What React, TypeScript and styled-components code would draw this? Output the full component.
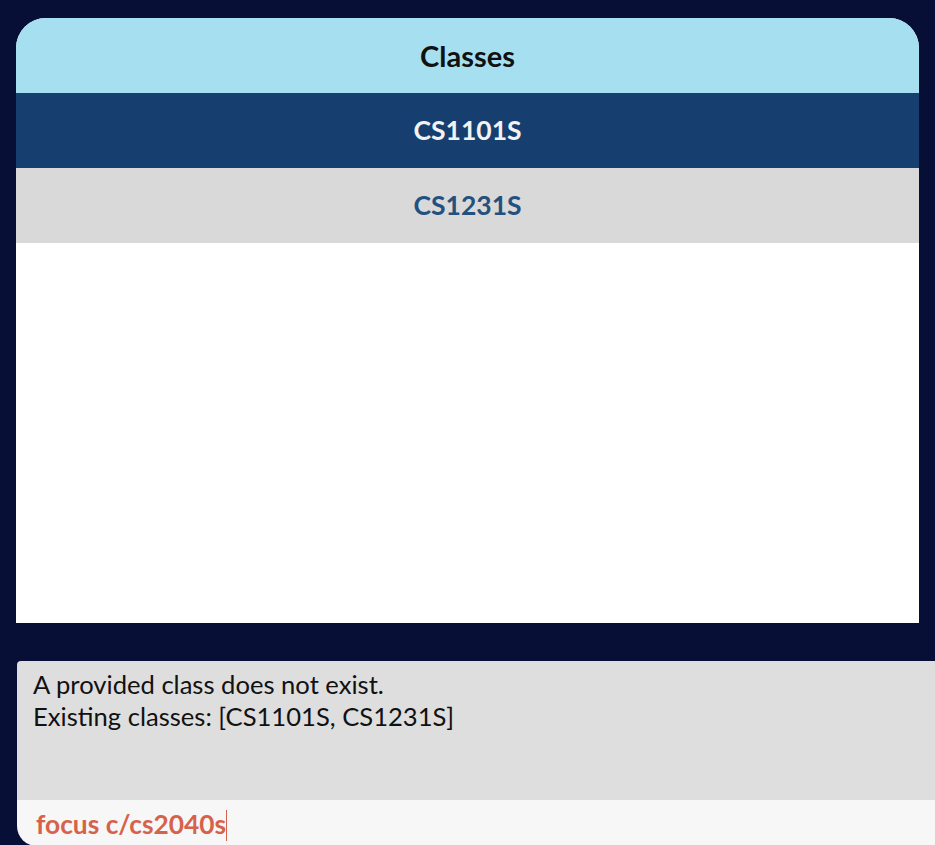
import styled, { createGlobalStyle } from 'styled-components';

const GlobalStyle = createGlobalStyle`
  html, body {
    margin: 0;
    padding: 0;
    background: #070f36;
    overflow: hidden;
  }
  body {
    font-family: Lato, 'Open Sans', sans-serif;
  }
`;

const classes = ['CS1101S', 'CS1231S'];
const selected = 'CS1101S';

const Page = styled.div`
  width: 935px;
  height: 845px;
  display: flex;
  flex-direction: column;
  padding: 18px 0 0 16px;
  box-sizing: border-box;
`;

const ClassPanel = styled.div`
  width: 903px;
  height: 605px;
  flex-shrink: 0;
  background: #ffffff;
  border-radius: 30px 30px 0 0;
  overflow: hidden;
  display: flex;
  flex-direction: column;
`;

const PanelHeader = styled.div`
  height: 75px;
  flex-shrink: 0;
  background: #a6dff0;
  color: #111111;
  font-size: 29px;
  font-weight: 700;
  display: flex;
  align-items: center;
  justify-content: center;
`;

const ClassRow = styled.div<{ $selected: boolean }>`
  height: 75px;
  flex-shrink: 0;
  display: flex;
  align-items: center;
  justify-content: center;
  font-size: 26.5px;
  font-weight: 700;
  padding-bottom: 2px;
  box-sizing: border-box;
  background: ${(p) => (p.$selected ? '#163f70' : '#d9d9d9')};
  color: ${(p) => (p.$selected ? '#f2f2f2' : '#245080')};
`;

const Console = styled.div`
  margin-top: 38px;
  margin-left: 1px;
  width: 960px;
  height: 185px;
  flex-shrink: 0;
  display: flex;
  flex-direction: column;
  border-radius: 4px 0 0 20px;
  overflow: hidden;
`;

const ResultBox = styled.div`
  height: 139px;
  flex-shrink: 0;
  background: #dedede;
  color: #111111;
  font-size: 25.6px;
  line-height: 32px;
  padding: 7px 16px;
  box-sizing: border-box;
  white-space: pre-wrap;
`;

const CommandBox = styled.div`
  flex: 1;
  background: #f7f7f7;
  color: #d6624b;
  font-size: 26.3px;
  line-height: 32px;
  font-weight: 700;
  padding: 8px 19px 0;
  display: flex;
  align-items: flex-start;
`;

const Caret = styled.span`
  display: inline-block;
  width: 1px;
  height: 31px;
  background: #d6624b;
  margin-top: 2px;
`;

export default function App() {
  return (
    <>
      <GlobalStyle />
      <Page>
        <ClassPanel>
          <PanelHeader>Classes</PanelHeader>
          {classes.map((c) => (
            <ClassRow key={c} $selected={c === selected}>
              {c}
            </ClassRow>
          ))}
        </ClassPanel>
        <Console>
          <ResultBox>
            {'A provided class does not exist.\nExisting classes: [CS1101S, CS1231S]'}
          </ResultBox>
          <CommandBox>
            <span>focus c/cs2040s</span>
            <Caret />
          </CommandBox>
        </Console>
      </Page>
    </>
  );
}
